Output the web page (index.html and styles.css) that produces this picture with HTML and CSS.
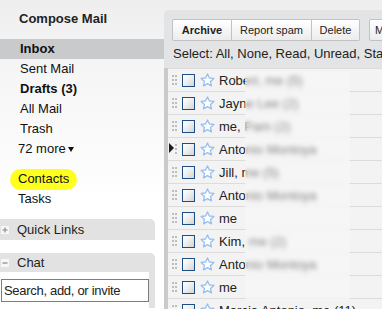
FILE: index.html
```html
<!DOCTYPE html>
<html lang="en">
<head>
  <meta charset="UTF-8">
  <meta name="viewport" content="width=device-width, initial-scale=1.0">
  <title>Gmail - Inbox</title>
  <link rel="stylesheet" href="styles.css">
</head>
<body>
  <aside class="sidebar">
    <div class="compose">Compose Mail</div>
    <nav class="labels">
      <a class="current bold" href="#">Inbox</a>
      <a href="#">Sent Mail</a>
      <a class="bold" href="#">Drafts (3)</a>
      <a href="#">All Mail</a>
      <a href="#">Trash</a>
      <a class="more" href="#">72 more<span class="caret"></span></a>
    </nav>
    <nav class="apps">
      <a href="#"><span class="marked">Contacts</span></a>
      <a href="#">Tasks</a>
    </nav>
    <div class="box">
      <div class="box-head">
        <svg class="toggle" width="8" height="8" viewBox="0 0 8 8"><rect width="8" height="8" fill="#f7f7f7"/><path d="M4 1.5v5M1.5 4h5" stroke="#a3a3a3" stroke-width="1.6"/></svg>
        Quick Links
      </div>
    </div>
    <div class="box chat">
      <div class="box-head">
        <svg class="toggle" width="8" height="8" viewBox="0 0 8 8"><rect width="8" height="8" fill="#f7f7f7"/><path d="M1.5 4h5" stroke="#a3a3a3" stroke-width="1.6"/></svg>
        Chat
      </div>
      <div class="chat-body">
        <input class="search" type="text" value="Search, add, or invite">
      </div>
    </div>
  </aside>

  <main class="mail">
    <div class="toolbar">
      <div class="btn-group">
        <button class="btn bold archive">Archive</button>
        <button class="btn spam">Report spam</button>
        <button class="btn delete">Delete</button>
      </div>
      <button class="btn move">Move to</button>
    </div>
    <div class="select">Select: All, None, Read, Unread, Starred, Unstarred</div>

    <div class="list" id="list">
      <div class="redact"></div>
    </div>
  </main>

  <script>
    const threads = [
      'Robert, me (5)',
      'Jayne Lee (2)',
      'me, Pam (2)',
      'Antonio Montoya',
      'Jill, me (5)',
      'Antonio Montoya',
      'me',
      'Kim, me (2)',
      'Antonio Montoya',
      'me',
      'Marcia Antonio, me (11)'
    ];
    const list = document.getElementById('list');

    threads.forEach((from, index) => {
      const row = document.createElement('div');
      row.className = index === 3 ? 'row current' : 'row';
      row.innerHTML = `
        <svg class="handle" width="5" height="10" viewBox="0 0 5 10">
          <rect x="0" y="0" width="2" height="2"/><rect x="3" y="0" width="2" height="2"/>
          <rect x="0" y="4" width="2" height="2"/><rect x="3" y="4" width="2" height="2"/>
          <rect x="0" y="8" width="2" height="2"/><rect x="3" y="8" width="2" height="2"/>
        </svg>
        <span class="check"></span>
        <svg class="star" width="15" height="14" viewBox="0 0 15 14">
          <polygon points="7.5,0.9 9.4,5 13.9,5.4 10.5,8.4 11.5,12.9 7.5,10.6 3.5,12.9 4.5,8.4 1.1,5.4 5.6,5" />
        </svg>
        <span class="from">${from}</span>
      `;
      list.appendChild(row);
    });
  </script>
</body>
</html>
```

FILE: styles.css
```css
body {
  margin: 0;
  height: 309px;
  overflow: hidden;
  display: flex;
  align-items: flex-start;
  font-family: "Liberation Sans", Arial, sans-serif;
  font-size: 13px;
  color: #222;
  background: linear-gradient(#eeeeee 0, #f5f5f5 60px, #fafafa 140px, #fff 200px);
}
.bold { font-weight: bold; }

.sidebar { width: 164px; flex-shrink: 0; }
.compose {
  height: 39px;
  box-sizing: border-box;
  padding: 11px 0 0 19px;
  line-height: 16px;
  font-weight: bold;
}
.labels a, .apps a {
  display: block;
  height: 20px;
  line-height: 20px;
  padding-left: 20px;
  color: #111;
  text-decoration: none;
}
.labels a.current { background: #c9cacc; }
.labels a.more { padding-left: 18px; }
.caret {
  display: inline-block;
  margin-left: 2px;
  border-left: 3px solid transparent;
  border-right: 3px solid transparent;
  border-top: 5px solid #111;
  vertical-align: middle;
}
.apps { margin-top: 10px; }
.apps a { padding-left: 18px; }
.apps a:first-child { padding-left: 10px; }
.marked {
  display: inline-block;
  height: 21px;
  padding: 0 8px;
  background: #ffff1f;
  border-radius: 11px;
}

.box { width: 155px; margin-top: 10px; }
.box.chat { margin-top: 13px; }
.box-head {
  display: flex;
  align-items: center;
  height: 21px;
  background: #e2e2e2;
  border-top-right-radius: 5px;
  color: #222;
}
.chat .box-head { height: 19px; }
.toggle { margin: 0 8px 0 1px; }
.chat-body {
  background: #fff;
  border-right: 6px solid #e2e2e2;
  padding: 7px 0 6px 1px;
}
.search {
  display: block;
  width: 148px;
  height: 23px;
  box-sizing: border-box;
  margin: 0;
  padding: 0 2px;
  border: 1px solid #7d7d7d;
  font-family: "Liberation Sans", Arial, sans-serif;
  font-size: 13px;
  letter-spacing: -0.3px;
  color: #222;
}

.mail {
  flex: 1;
  min-width: 0;
  margin-top: 10px;
  background: #e3e4e6;
  border-top-left-radius: 4px;
  overflow: hidden;
}
.toolbar {
  display: flex;
  gap: 9px;
  padding: 9px 0 0 8px;
}
.btn-group { display: flex; }
.btn {
  flex-shrink: 0;
  height: 22px;
  box-sizing: border-box;
  padding: 0;
  border: 1px solid #c2c2c2;
  background: linear-gradient(#ffffff, #ececec);
  font-family: "Liberation Sans", Arial, sans-serif;
  font-size: 11px;
  color: #222;
  white-space: nowrap;
}
.archive { width: 60px; border-radius: 2px 0 0 2px; }
.spam { width: 80px; border-left: none; }
.delete { width: 48px; border-left: none; border-radius: 0 2px 2px 0; }
.move { width: 70px; border-radius: 2px; text-align: left; padding-left: 5px; }
.select {
  padding: 5px 0 6px 9px;
  line-height: 16px;
  white-space: nowrap;
}

.list {
  position: relative;
  border-left: 4px solid #c9cacc;
  background: #f3f3f3;
}
.row {
  position: relative;
  display: flex;
  align-items: center;
  height: 23px;
  box-sizing: border-box;
  padding-left: 4px;
  border-top: 1px solid #dcdcdc;
  white-space: nowrap;
}
.handle { fill: #bdbdbd; flex-shrink: 0; }
.row.current::before {
  content: '';
  position: absolute;
  left: 1px;
  top: 5px;
  border-left: 5px solid #1e1e1e;
  border-top: 5px solid transparent;
  border-bottom: 5px solid transparent;
}
.row.current .handle rect:nth-child(odd) { fill: #f3f3f3; }
.check {
  width: 13px;
  height: 13px;
  box-sizing: border-box;
  margin-left: 5px;
  border: 1px solid #1d4f86;
  background: linear-gradient(135deg, #ffffff 0%, #f2f2f2 40%, #d4d4d4 100%);
  flex-shrink: 0;
}
.star {
  margin-left: 5px;
  fill: #fff;
  stroke: #98c0ee;
  stroke-width: 1.3;
  stroke-linejoin: round;
  flex-shrink: 0;
}
.from { margin-left: 4px; color: #222; }

.redact {
  position: absolute;
  z-index: 2;
  left: 77px;
  top: 4px;
  width: 105px;
  height: 228px;
  backdrop-filter: blur(2.5px);
  background: rgba(250, 250, 250, 0.45);
}
```
